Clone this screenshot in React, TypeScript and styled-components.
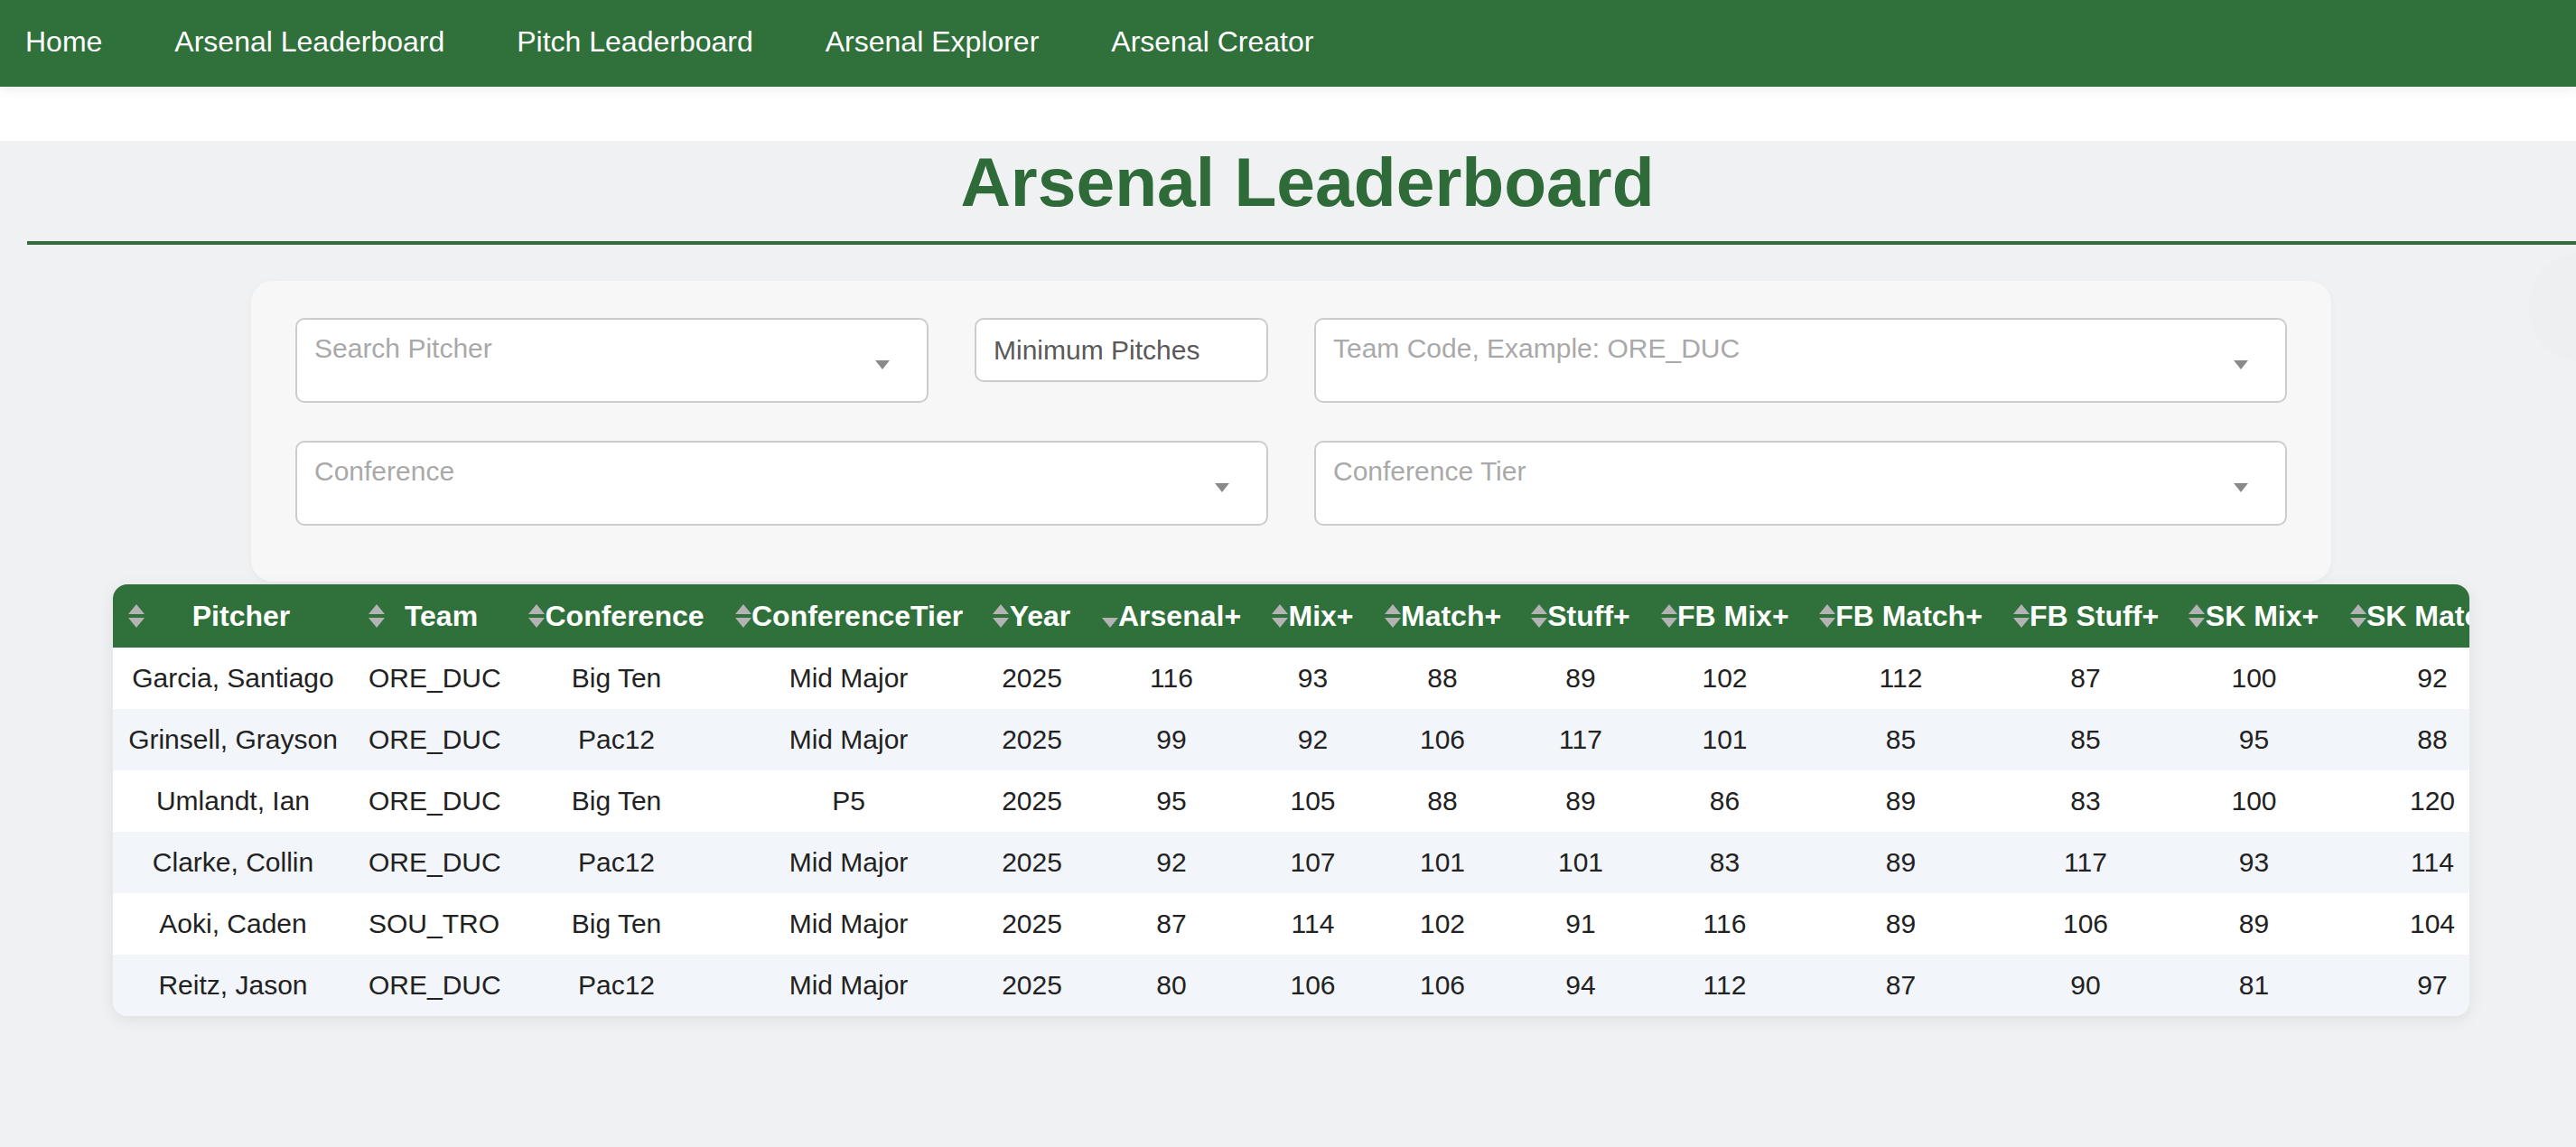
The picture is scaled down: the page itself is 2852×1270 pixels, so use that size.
import React from "react";
import styled, { createGlobalStyle } from "styled-components";

const GREEN = "#30703a";

const GlobalStyle = createGlobalStyle`
  html, body {
    margin: 0;
    padding: 0;
    background: #ffffff;
    font-family: "Liberation Sans", Arial, Helvetica, sans-serif;
    overflow-x: hidden;
  }
  * { box-sizing: border-box; }
`;

const Nav = styled.nav`
  height: 96px;
  background: ${GREEN};
  display: flex;
  align-items: center;
  gap: 80px;
  padding: 0 0 4px 28px;
  box-shadow: 0 3px 12px rgba(0, 0, 0, 0.08);
  position: relative;
  z-index: 2;
`;

const NavLink = styled.a`
  color: #ffffff;
  font-size: 32px;
  text-decoration: none;
  white-space: nowrap;
`;

const Spacer = styled.div`
  height: 60px;
  background: #ffffff;
`;

const Main = styled.main`
  background: #f0f1f3;
  min-height: calc(100vh - 156px);
  padding-bottom: 60px;
  position: relative;
  overflow: hidden;
`;

const Title = styled.h1`
  margin: 0 -13px 0 30px;
  padding: 1px 0 22px;
  text-align: center;
  font-size: 76.8px;
  line-height: 88px;
  font-weight: 700;
  color: #2f6b39;
  border-bottom: 4px solid #336b3d;
`;

const Content = styled.div`
  padding: 40px 118px 0 125px;
`;

const FilterCard = styled.section`
  margin: 0 153px;
  background: #f7f7f7;
  border-radius: 24px;
  padding: 41px 49px 62px;
  box-shadow: 0 2px 8px rgba(0, 0, 0, 0.04);
  display: grid;
  grid-template-columns: 1fr 1fr;
  column-gap: 51px;
  row-gap: 42px;
`;

const Split = styled.div`
  display: flex;
  align-items: flex-start;
  gap: 51px;
`;

const SelectBox = styled.div`
  flex: 1;
  height: 94px;
  background: #ffffff;
  border: 2px solid #cccccc;
  border-radius: 10px;
  display: flex;
  padding: 15px 41px 0 19px;
`;

const Placeholder = styled.span`
  flex: 1;
  font-size: 30px;
  color: #a9a9a9;
  white-space: nowrap;
`;

const Arrow = styled.svg`
  align-self: center;
  margin-top: -6px;
  flex: none;
`;

const NumberInput = styled.div`
  width: 325px;
  height: 71px;
  background: #ffffff;
  border: 2px solid #cccccc;
  border-radius: 10px;
  display: flex;
  align-items: center;
  padding: 0 19px;
  font-size: 30px;
  color: #5a5a5a;
  white-space: nowrap;
`;

const TableWrap = styled.div`
  margin-top: 3px;
  background: #ffffff;
  border-radius: 16px;
  overflow: hidden;
  box-shadow: 0 4px 18px rgba(0, 0, 0, 0.08);
`;

const Table = styled.table`
  border-collapse: collapse;
  table-layout: fixed;
  width: 2676px;
`;

const HeadRow = styled.tr`
  background: ${GREEN};
  height: 70px;
`;

const Th = styled.th`
  padding: 0 17px;
  color: #ffffff;
  font-size: 32px;
  font-weight: 700;
  white-space: nowrap;
`;

const ThInner = styled.div`
  display: flex;
  align-items: center;
`;

const ThLabel = styled.span`
  flex: 1;
  text-align: center;
`;

const BodyRow = styled.tr<{ $alt: boolean }>`
  height: 68px;
  background: ${(p) => (p.$alt ? "#f2f5f9" : "#ffffff")};
`;

const Td = styled.td`
  padding: 0 17px;
  text-align: center;
  font-size: 30px;
  color: #222222;
  white-space: nowrap;
`;

const Ghost = styled.div`
  position: absolute;
  right: -68px;
  top: 124px;
  width: 120px;
  height: 120px;
  border-radius: 50%;
  background: rgba(0, 0, 0, 0.006);
  box-shadow: 0 0 10px rgba(0, 0, 0, 0.01);
`;

const SortIcon = ({ only }: { only?: "down" }) => (
  <svg width="18" height="26" viewBox="0 0 18 26" style={{ flex: "none" }}>
    {only !== "down" && <polygon points="9,0 18,11 0,11" fill="#b3b3b3" />}
    <polygon points="0,15 18,15 9,26" fill="#b3b3b3" />
  </svg>
);

const DropArrow = () => (
  <Arrow width="16" height="10" viewBox="0 0 16 10">
    <polygon points="0,0 16,0 8,10" fill="#8a8a8a" />
  </Arrow>
);

const columns: { label: string; width: number; only?: "down" }[] = [
  { label: "Pitcher", width: 266 },
  { label: "Team", width: 177 },
  { label: "Conference", width: 229 },
  { label: "ConferenceTier", width: 285 },
  { label: "Year", width: 121 },
  { label: "Arsenal+", width: 188, only: "down" },
  { label: "Mix+", width: 125 },
  { label: "Match+", width: 162 },
  { label: "Stuff+", width: 144 },
  { label: "FB Mix+", width: 175 },
  { label: "FB Match+", width: 215 },
  { label: "FB Stuff+", width: 194 },
  { label: "SK Mix+", width: 179 },
  { label: "SK Match+", width: 216 },
];

const rows: (string | number)[][] = [
  ["Garcia, Santiago", "ORE_DUC", "Big Ten", "Mid Major", 2025, 116, 93, 88, 89, 102, 112, 87, 100, 92],
  ["Grinsell, Grayson", "ORE_DUC", "Pac12", "Mid Major", 2025, 99, 92, 106, 117, 101, 85, 85, 95, 88],
  ["Umlandt, Ian", "ORE_DUC", "Big Ten", "P5", 2025, 95, 105, 88, 89, 86, 89, 83, 100, 120],
  ["Clarke, Collin", "ORE_DUC", "Pac12", "Mid Major", 2025, 92, 107, 101, 101, 83, 89, 117, 93, 114],
  ["Aoki, Caden", "SOU_TRO", "Big Ten", "Mid Major", 2025, 87, 114, 102, 91, 116, 89, 106, 89, 104],
  ["Reitz, Jason", "ORE_DUC", "Pac12", "Mid Major", 2025, 80, 106, 106, 94, 112, 87, 90, 81, 97],
];

export default function App() {
  return (
    <>
      <GlobalStyle />
      <Nav>
        <NavLink href="#">Home</NavLink>
        <NavLink href="#">Arsenal Leaderboard</NavLink>
        <NavLink href="#">Pitch Leaderboard</NavLink>
        <NavLink href="#">Arsenal Explorer</NavLink>
        <NavLink href="#">Arsenal Creator</NavLink>
      </Nav>
      <Spacer />
      <Main>
        <Ghost />
        <Title>Arsenal Leaderboard</Title>
        <Content>
          <FilterCard>
            <Split>
              <SelectBox>
                <Placeholder>Search Pitcher</Placeholder>
                <DropArrow />
              </SelectBox>
              <NumberInput>Minimum Pitches</NumberInput>
            </Split>
            <SelectBox>
              <Placeholder>Team Code, Example: ORE_DUC</Placeholder>
              <DropArrow />
            </SelectBox>
            <SelectBox>
              <Placeholder>Conference</Placeholder>
              <DropArrow />
            </SelectBox>
            <SelectBox>
              <Placeholder>Conference Tier</Placeholder>
              <DropArrow />
            </SelectBox>
          </FilterCard>
          <TableWrap>
            <Table>
              <colgroup>
                {columns.map((c) => (
                  <col key={c.label} style={{ width: c.width }} />
                ))}
              </colgroup>
              <thead>
                <HeadRow>
                  {columns.map((c) => (
                    <Th key={c.label}>
                      <ThInner>
                        <SortIcon only={c.only} />
                        <ThLabel>{c.label}</ThLabel>
                      </ThInner>
                    </Th>
                  ))}
                </HeadRow>
              </thead>
              <tbody>
                {rows.map((r, i) => (
                  <BodyRow key={i} $alt={i % 2 === 1}>
                    {r.map((v, j) => (
                      <Td key={j}>{v}</Td>
                    ))}
                  </BodyRow>
                ))}
              </tbody>
            </Table>
          </TableWrap>
        </Content>
      </Main>
    </>
  );
}
